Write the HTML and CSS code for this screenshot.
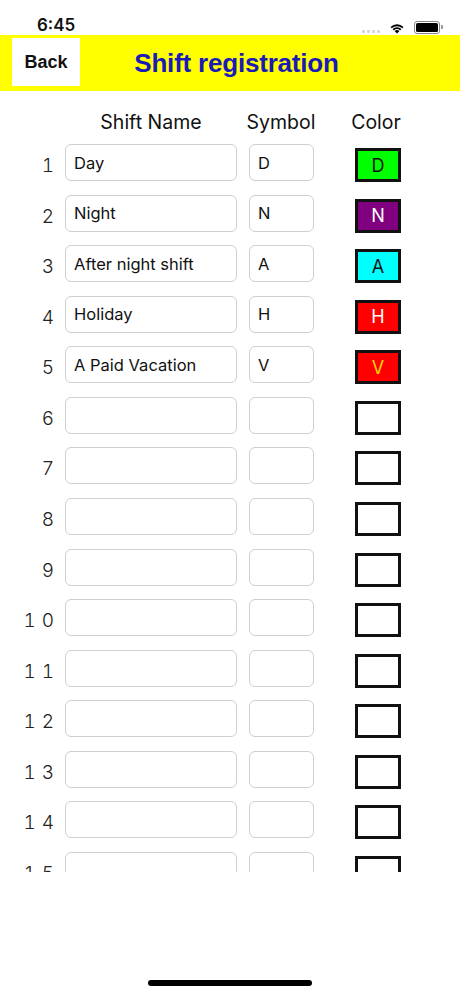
FILE: index.html
```html
<!DOCTYPE html>
<html lang="en">
<head>
  <meta charset="UTF-8" />
  <title>Shift registration</title>
  <link rel="stylesheet" href="styles.css">
</head>
<body>

  <div class="status-bar">
    <span class="clock">6:45</span>
    <div class="status-icons">
      <span class="signal"><i></i><i></i><i></i><i></i></span>
      <svg class="wifi" width="16" height="12" viewBox="0 0 16 12">
        <path d="M8 11.6 L5.6 9.1 A3.4 3.4 0 0 1 10.4 9.1 Z" fill="#000"/>
        <path d="M3.6 7.1 A6.2 6.2 0 0 1 12.4 7.1 L11.1 8.4 A4.4 4.4 0 0 0 4.9 8.4 Z" fill="#000"/>
        <path d="M1.5 5 A9.2 9.2 0 0 1 14.5 5 L13.2 6.3 A7.4 7.4 0 0 0 2.8 6.3 Z" fill="#000"/>
      </svg>
      <span class="battery"><span class="battery-level"></span></span>
    </div>
  </div>

  <div class="nav-bar">
    <button class="back-btn">Back</button>
    <h1 class="title">Shift registration</h1>
  </div>

  <div class="list">
    <div class="row head">
      <span class="num"></span>
      <span class="name-col">Shift Name</span>
      <span class="symbol-col">Symbol</span>
      <span class="color-col">Color</span>
    </div>

    <div class="rows">
      <div class="row">
        <span class="num">1</span>
        <input class="name-col field" value="Day">
        <input class="symbol-col field" value="D">
        <span class="color-col swatch day">D</span>
      </div>
      <div class="row">
        <span class="num">2</span>
        <input class="name-col field" value="Night">
        <input class="symbol-col field" value="N">
        <span class="color-col swatch night">N</span>
      </div>
      <div class="row">
        <span class="num">3</span>
        <input class="name-col field" value="After night shift">
        <input class="symbol-col field" value="A">
        <span class="color-col swatch after">A</span>
      </div>
      <div class="row">
        <span class="num">4</span>
        <input class="name-col field" value="Holiday">
        <input class="symbol-col field" value="H">
        <span class="color-col swatch holiday">H</span>
      </div>
      <div class="row">
        <span class="num">5</span>
        <input class="name-col field" value="A Paid Vacation">
        <input class="symbol-col field" value="V">
        <span class="color-col swatch vacation">V</span>
      </div>
      <div class="row">
        <span class="num">6</span>
        <input class="name-col field">
        <input class="symbol-col field">
        <span class="color-col swatch"></span>
      </div>
      <div class="row">
        <span class="num">7</span>
        <input class="name-col field">
        <input class="symbol-col field">
        <span class="color-col swatch"></span>
      </div>
      <div class="row">
        <span class="num">8</span>
        <input class="name-col field">
        <input class="symbol-col field">
        <span class="color-col swatch"></span>
      </div>
      <div class="row">
        <span class="num">9</span>
        <input class="name-col field">
        <input class="symbol-col field">
        <span class="color-col swatch"></span>
      </div>
      <div class="row">
        <span class="num">10</span>
        <input class="name-col field">
        <input class="symbol-col field">
        <span class="color-col swatch"></span>
      </div>
      <div class="row">
        <span class="num">11</span>
        <input class="name-col field">
        <input class="symbol-col field">
        <span class="color-col swatch"></span>
      </div>
      <div class="row">
        <span class="num">12</span>
        <input class="name-col field">
        <input class="symbol-col field">
        <span class="color-col swatch"></span>
      </div>
      <div class="row">
        <span class="num">13</span>
        <input class="name-col field">
        <input class="symbol-col field">
        <span class="color-col swatch"></span>
      </div>
      <div class="row">
        <span class="num">14</span>
        <input class="name-col field">
        <input class="symbol-col field">
        <span class="color-col swatch"></span>
      </div>
      <div class="row">
        <span class="num">15</span>
        <input class="name-col field">
        <input class="symbol-col field">
        <span class="color-col swatch"></span>
      </div>
    </div>
  </div>

  <div class="home-area">
    <span class="home-indicator"></span>
  </div>

</body>
</html>
```

FILE: styles.css
```css
body {
  margin: 0;
  width: 460px;
  height: 996px;
  background: #fff;
  font-family: Inter, "Noto Sans", sans-serif;
  color: #111;
  overflow: hidden;
}

/* status bar */
.status-bar {
  height: 35px;
  display: flex;
  align-items: flex-end;
  justify-content: space-between;
  padding: 0 20px 0 37px;
  box-sizing: border-box;
}
.clock {
  font-size: 17px;
  font-weight: 600;
  line-height: 17px;
  margin-bottom: 1px;
}
.status-icons {
  display: flex;
  align-items: center;
  gap: 9px;
  margin-bottom: 1px;
}
.signal {
  display: flex;
  gap: 2px;
  align-items: flex-end;
  margin-top: 8px;
}
.signal i {
  width: 3px;
  height: 3px;
  border-radius: 1px;
  background: #d4d4d4;
}
.battery {
  position: relative;
  width: 22px;
  height: 9px;
  border: 1.5px solid #888;
  border-radius: 3px;
  padding: 1px;
}
.battery::after {
  content: "";
  position: absolute;
  right: -4px;
  top: 3px;
  width: 2px;
  height: 4px;
  border-radius: 0 1px 1px 0;
  background: #999;
}
.battery-level {
  display: block;
  width: 100%;
  height: 100%;
  border-radius: 1.5px;
  background: #000;
}

/* yellow title bar */
.nav-bar {
  height: 56px;
  background: #ffff00;
  display: grid;
  grid-template-columns: 80px 1fr 80px;
  align-items: center;
}
.back-btn {
  margin-left: 12px;
  margin-top: -2px;
  width: 68px;
  height: 48px;
  border: none;
  background: #fff;
  font-family: "Liberation Sans", Arial, sans-serif;
  font-weight: bold;
  font-size: 18px;
  color: #111;
  padding: 0;
}
.title {
  margin: 0;
  padding-left: 13px;
  text-align: center;
  font-family: "Liberation Sans", Arial, sans-serif;
  font-weight: bold;
  font-size: 26px;
  color: #1a1ab8;
  letter-spacing: -0.2px;
}

/* shift list */
.list {
  height: 781px;
  overflow: hidden;
  padding-top: 11px;
  box-sizing: border-box;
}
.row {
  display: flex;
  align-items: flex-start;
  height: 37px;
}
.row.head {
  height: 40px;
  align-items: center;
  margin-bottom: 2px;
  font-size: 19.5px;
  color: #111;
}
.head span {
  text-align: center;
}
.head .symbol-col {
  margin-left: 9px;
  width: 70px;
}
.head .color-col {
  margin-left: 34px;
  width: 52px;
}
.rows {
  display: flex;
  flex-direction: column;
  gap: 13.57px;
}
.num {
  width: 60px;
  flex: none;
  text-align: right;
  font-size: 19px;
  font-weight: 300;
  font-variant-numeric: tabular-nums;
  color: #222;
  line-height: 37px;
  padding-top: 3px;
  letter-spacing: 6px;
  margin-right: -7px;
}
.name-col {
  width: 172px;
  margin-left: 12px;
  flex: none;
}
.symbol-col {
  width: 65px;
  margin-left: 12px;
  flex: none;
}
.color-col {
  width: 46px;
  margin-left: 41px;
  flex: none;
}
.field {
  height: 37px;
  box-sizing: border-box;
  border: 1px solid #cfcfcf;
  border-radius: 6px;
  padding: 0 8px;
  font-family: Inter, "Noto Sans", sans-serif;
  font-size: 16.5px;
  color: #111;
  background: #fff;
  outline: none;
}
.swatch {
  height: 34px;
  margin-top: 4px;
  box-sizing: border-box;
  border: 3px solid #111;
  display: flex;
  align-items: center;
  justify-content: center;
  font-size: 18px;
  background: #fff;
}
.swatch.day { background: #00ff00; color: #111; }
.swatch.night { background: #800080; color: #fff; }
.swatch.after { background: #00ffff; color: #111; }
.swatch.holiday { background: #ff0000; color: #fff; }
.swatch.vacation { background: #ff0000; color: #ffd600; }

/* home indicator */
.home-area {
  height: 124px;
  display: flex;
  justify-content: center;
  align-items: flex-end;
  padding-bottom: 10px;
  box-sizing: border-box;
}
.home-indicator {
  width: 164px;
  height: 6px;
  border-radius: 3px;
  background: #000;
}
```
